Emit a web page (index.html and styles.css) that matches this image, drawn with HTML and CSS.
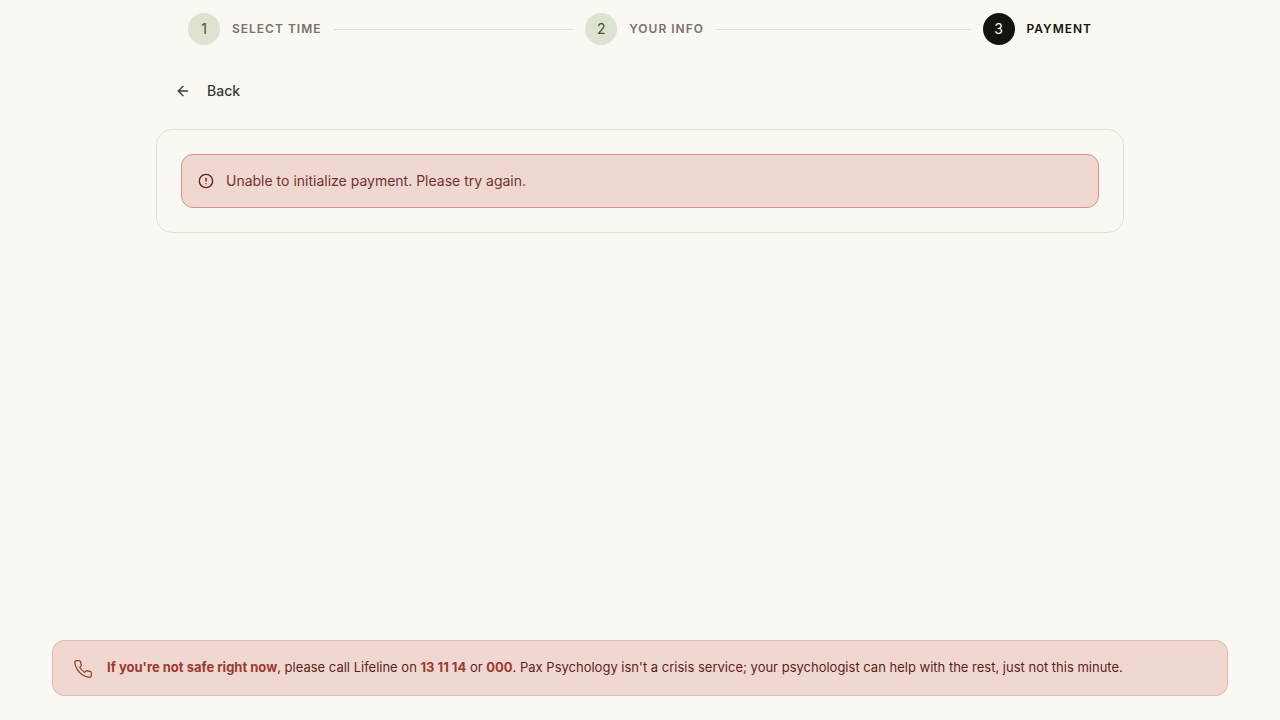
FILE: index.html
```html
<!DOCTYPE html>
<html lang="en">
<head>
    <meta charset="UTF-8">
    <meta name="viewport" content="width=device-width, initial-scale=1.0">
    <title>Payment - Pax Psychology</title>
    <link rel="stylesheet" href="styles.css">
</head>
<body>
    <main class="booking">
        <ol class="stepper">
            <li class="step">
                <span class="step-number">1</span>
                <span class="step-label">Select time</span>
            </li>
            <li class="step">
                <span class="step-number">2</span>
                <span class="step-label">Your info</span>
            </li>
            <li class="step active" aria-current="step">
                <span class="step-number">3</span>
                <span class="step-label">Payment</span>
            </li>
        </ol>

        <button type="button" class="back-btn">
            <svg class="back-icon" viewBox="0 0 24 24" aria-hidden="true">
                <path d="m12 19-7-7 7-7"/>
                <path d="M19 12H5"/>
            </svg>
            Back
        </button>

        <section class="card">
            <div class="alert" role="alert">
                <svg class="alert-icon" viewBox="0 0 24 24" aria-hidden="true">
                    <circle cx="12" cy="12" r="10"/>
                    <path d="M12 8v4"/>
                    <path d="M12 16h.01"/>
                </svg>
                <p>Unable to initialize payment. Please try again.</p>
            </div>
        </section>
    </main>

    <aside class="crisis">
        <svg class="crisis-icon" viewBox="0 0 24 24" aria-hidden="true">
            <path d="M22 16.92v3a2 2 0 0 1-2.18 2 19.79 19.79 0 0 1-8.63-3.07 19.5 19.5 0 0 1-6-6 19.79 19.79 0 0 1-3.07-8.67A2 2 0 0 1 4.11 2h3a2 2 0 0 1 2 1.72 12.84 12.84 0 0 0 .7 2.81 2 2 0 0 1-.45 2.11L8.09 9.91a16 16 0 0 0 6 6l1.27-1.27a2 2 0 0 1 2.11-.45 12.84 12.84 0 0 0 2.81.7A2 2 0 0 1 22 16.92z"/>
        </svg>
        <p><strong>If you're not safe right now</strong>, please call Lifeline on <a href="tel:131114">13 11 14</a> or <a href="tel:000">000</a>. Pax Psychology isn't a crisis service; your psychologist can help with the rest, just not this minute.</p>
    </aside>
</body>
</html>
```
FILE: styles.css
```css
* {
    box-sizing: border-box;
}

body {
    display: flex;
    flex-direction: column;
    min-height: 100vh;
    margin: 0;
    background-color: #faf8f3;
    color: #3a3a34;
    font-family: Inter, sans-serif;
    font-size: 14px;
    line-height: 20px;
}

p {
    margin: 0;
}

svg {
    flex: none;
    fill: none;
    stroke: currentColor;
    stroke-width: 2;
    stroke-linecap: round;
    stroke-linejoin: round;
}

.booking {
    flex: 1;
    width: 100%;
    max-width: 1016px;
    margin: 0 auto;
    padding: 13px 24px 24px;
}

.stepper {
    display: flex;
    gap: 12px;
    margin: 0 0 28px;
    padding: 0 32px;
    list-style: none;
}

.step {
    display: flex;
    flex: 1;
    align-items: center;
    gap: 12px;
}

/* connector line to the next step */
.step:not(:last-child)::after {
    content: "";
    flex: 1;
    height: 1px;
    background-color: #dfdfd3;
}

.step:last-child {
    flex: none;
}

.step-number {
    display: flex;
    align-items: center;
    justify-content: center;
    width: 32px;
    height: 32px;
    border-radius: 50%;
    background-color: #dde3d0;
    color: #44523c;
}

.step-label {
    color: #78716c;
    font-size: 12px;
    font-weight: 600;
    letter-spacing: 1px;
    text-transform: uppercase;
}

.step.active .step-number {
    background-color: #14140f;
    color: #faf8f3;
}

.step.active .step-label {
    color: #14140f;
}

.back-btn {
    display: flex;
    align-items: center;
    gap: 16px;
    height: 36px;
    margin: 0 0 20px;
    padding: 0 19px;
    border: none;
    background: none;
    color: #3a3a34;
    font: inherit;
    font-weight: 500;
    cursor: pointer;
}

.back-icon,
.alert-icon {
    width: 16px;
    height: 16px;
}

.card {
    padding: 24px;
    border: 1px solid #e3e0d3;
    border-radius: 16px;
}

.alert {
    display: flex;
    align-items: center;
    gap: 12px;
    padding: 16px;
    border: 1px solid #d0938a;
    border-radius: 12px;
    background-color: #f1d7d2;
    color: #5e1f18;
}

.alert p {
    color: #70342c;
}

.crisis {
    display: flex;
    align-items: flex-start;
    gap: 14px;
    margin: 0 52px 24px;
    padding: 16px 20px;
    border: 1px solid #e4b5ae;
    border-radius: 12px;
    background-color: #f1d7d2;
    color: #5e1f18;
    font-size: 13px;
}

.crisis-icon {
    width: 20px;
    height: 20px;
    margin-top: 2px;
    color: #9c3a2e;
    stroke-width: 1.5;
}

.crisis strong,
.crisis a {
    color: #9c3a2e;
    font-weight: 700;
    text-decoration: none;
}
```
